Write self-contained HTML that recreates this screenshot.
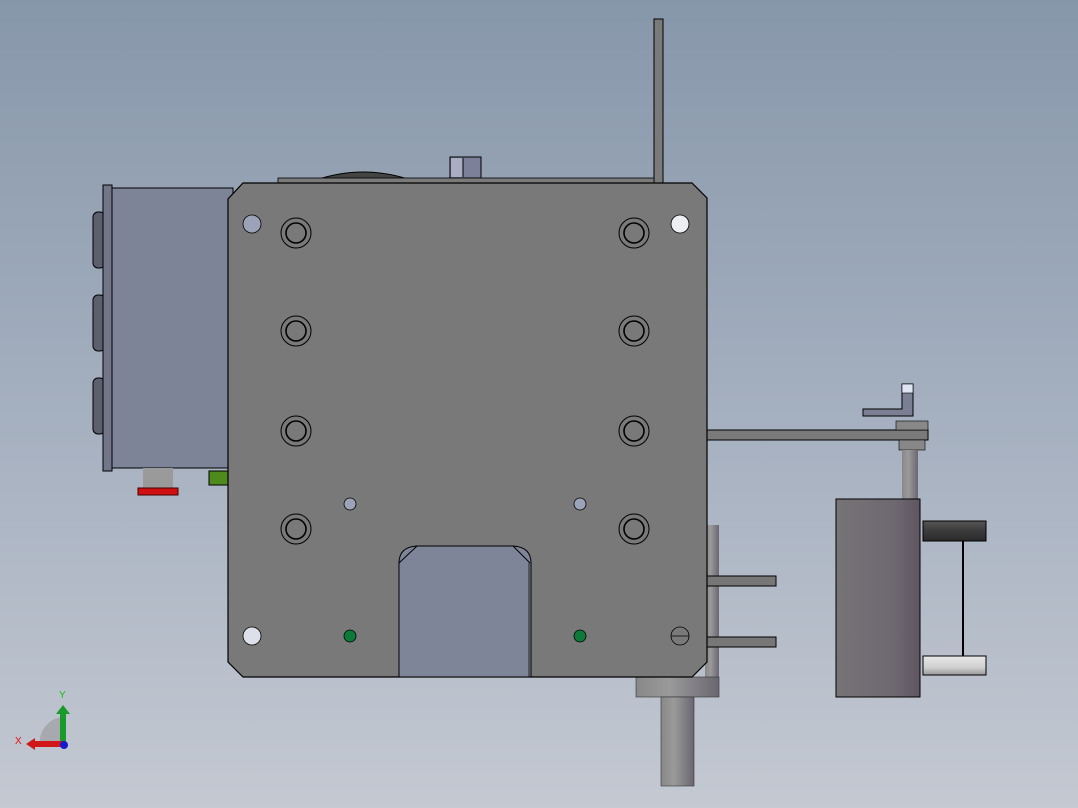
<!DOCTYPE html>
<html><head><style>
html,body{margin:0;padding:0;width:1078px;height:808px;overflow:hidden}
</style></head><body>
<svg width="1078" height="808" viewBox="0 0 1078 808" xmlns="http://www.w3.org/2000/svg">
<defs>
<linearGradient id="bg" x1="0" y1="0" x2="0" y2="1">
<stop offset="0" stop-color="#8797aa"/><stop offset="0.5" stop-color="#a4afbf"/><stop offset="1" stop-color="#c4c9d2"/>
</linearGradient>
<linearGradient id="blk" x1="0" y1="0" x2="1" y2="0">
<stop offset="0" stop-color="#767476"/><stop offset="0.7" stop-color="#6e6870"/><stop offset="1" stop-color="#5e5560"/>
</linearGradient>
<linearGradient id="cyl" x1="0" y1="0" x2="1" y2="0">
<stop offset="0" stop-color="#888"/><stop offset="0.4" stop-color="#9a9a9a"/><stop offset="1" stop-color="#6a6670"/>
</linearGradient>
<linearGradient id="dk" x1="0" y1="0" x2="0" y2="1">
<stop offset="0" stop-color="#555"/><stop offset="0.5" stop-color="#3a3a3a"/><stop offset="1" stop-color="#2a2a2a"/>
</linearGradient>
<linearGradient id="lt" x1="0" y1="0" x2="0" y2="1">
<stop offset="0" stop-color="#e8e8e8"/><stop offset="0.6" stop-color="#d0d0d0"/><stop offset="1" stop-color="#999"/>
</linearGradient>
</defs>
<rect width="1078" height="808" fill="url(#bg)"/>

<!-- top rod -->
<rect x="654" y="19" width="9" height="165" fill="#7a7a7a" stroke="#000" stroke-width="1"/>
<!-- hex nut -->
<rect x="450" y="157" width="31" height="21" fill="#7d8099" stroke="#000"/>
<rect x="451" y="158" width="12" height="19" fill="#a9adc2"/>
<line x1="463" y1="158" x2="463" y2="177" stroke="#000"/>
<!-- dome -->
<path d="M316 180 Q363 164 411 180 Z" fill="#444" stroke="#000"/>
<rect x="278" y="178" width="376" height="5" fill="#7a7a7a" stroke="#000" stroke-width="0.8"/>

<!-- left box -->
<rect x="93" y="212" width="12" height="56" rx="5" fill="#5d5f6e" stroke="#000"/>
<rect x="93" y="295" width="12" height="56" rx="5" fill="#5d5f6e" stroke="#000"/>
<rect x="93" y="378" width="12" height="56" rx="5" fill="#5d5f6e" stroke="#000"/>
<rect x="103" y="188" width="130" height="280" fill="#7d8498" stroke="#000"/>
<rect x="103" y="185" width="9" height="286" fill="#727688" stroke="#000"/>
<rect x="143" y="468" width="30" height="20" fill="#9a9a9a"/>
<rect x="138" y="488" width="40" height="7" fill="#d01010" stroke="#400"/>
<rect x="209" y="471" width="20" height="14" fill="#4f8a1c" stroke="#000"/>

<!-- right mechanism -->
<rect x="705" y="525" width="14" height="170" fill="url(#cyl)"/>
<rect x="707" y="576" width="69" height="10" fill="#777" stroke="#000"/>
<rect x="707" y="637" width="69" height="10" fill="#777" stroke="#000"/>
<rect x="636" y="677" width="83" height="20" fill="url(#cyl)" stroke="#333" stroke-width="0.6"/>
<rect x="661" y="697" width="33" height="89" fill="url(#cyl)" stroke="#333" stroke-width="0.6"/>

<rect x="707" y="430" width="221" height="10" fill="#7a7a7a" stroke="#000"/>
<rect x="896" y="421" width="32" height="9" fill="#888" stroke="#000" stroke-width="0.6"/>
<rect x="899" y="440" width="26" height="10" fill="#888" stroke="#000" stroke-width="0.6"/>
<rect x="902" y="450" width="16" height="50" fill="url(#cyl)"/>
<path d="M902 384 H913 V416 H863 V409 H902 Z" fill="#7b7f93" stroke="#000"/>
<rect x="902" y="384" width="11" height="9" fill="#dfe4f4" stroke="#000" stroke-width="0.6"/>
<rect x="836" y="499" width="84" height="198" fill="url(#blk)" stroke="#000"/>
<rect x="923" y="521" width="63" height="20" fill="url(#dk)" stroke="#000"/>
<rect x="923" y="656" width="63" height="19" fill="url(#lt)" stroke="#000"/>
<line x1="963" y1="541" x2="963" y2="656" stroke="#000" stroke-width="2"/>

<!-- main plate -->
<path d="M243 183 H692 L707 198 V662 L692 677 H243 L228 662 V199 Z" fill="#797979" stroke="#000" stroke-width="1.2"/>
<g fill="none" stroke="#000" stroke-width="1">
<circle cx="296" cy="233" r="15"/><circle cx="296" cy="233" r="10" stroke-width="1.6"/>
<circle cx="634" cy="233" r="15"/><circle cx="634" cy="233" r="10" stroke-width="1.6"/>
<circle cx="296" cy="331" r="15"/><circle cx="296" cy="331" r="10" stroke-width="1.6"/>
<circle cx="634" cy="331" r="15"/><circle cx="634" cy="331" r="10" stroke-width="1.6"/>
<circle cx="296" cy="431" r="15"/><circle cx="296" cy="431" r="10" stroke-width="1.6"/>
<circle cx="634" cy="431" r="15"/><circle cx="634" cy="431" r="10" stroke-width="1.6"/>
<circle cx="296" cy="529" r="15"/><circle cx="296" cy="529" r="10" stroke-width="1.6"/>
<circle cx="634" cy="529" r="15"/><circle cx="634" cy="529" r="10" stroke-width="1.6"/>
</g>
<g stroke="#000" stroke-width="0.8">
<circle cx="252" cy="224" r="9" fill="#9ca3b8"/>
<circle cx="680" cy="224" r="9" fill="#eceef2"/>
<circle cx="350" cy="504" r="6" fill="#9ca3b8"/>
<circle cx="580" cy="504" r="6" fill="#9ca3b8"/>
<circle cx="252" cy="636" r="9" fill="#dde0e8"/>
<circle cx="680" cy="636" r="9" fill="#797979"/>
<line x1="671" y1="636" x2="689" y2="636"/>
<circle cx="350" cy="636" r="6" fill="#0d7a3a"/>
<circle cx="580" cy="636" r="6" fill="#0d7a3a"/>
</g>
<path d="M399 677 V563 Q399 547 417 546 H513 Q531 547 531 563 V677 Z" fill="#7e8598" stroke="#000"/>
<line x1="399" y1="563" x2="417" y2="546" stroke="#000"/>
<line x1="513" y1="546" x2="530" y2="563" stroke="#000"/>
<line x1="529" y1="563" x2="529" y2="677" stroke="#000" stroke-width="0.7"/>

<!-- triad -->
<path d="M40 745 A25 25 0 0 1 63 717 V745 Z" fill="#a7a9ae"/>
<rect x="60" y="713" width="6" height="32" fill="#1a9a2a"/>
<path d="M56 714 L63 705 L70 714 Z" fill="#1a9a2a"/>
<rect x="34" y="741" width="30" height="6" fill="#d01818"/>
<path d="M35 738 L26 744 L35 750 Z" fill="#d01818"/>
<circle cx="64" cy="745" r="4" fill="#1818d0"/>
<text x="59" y="698" font-family="Liberation Sans, sans-serif" font-size="10" fill="#10c010">Y</text>
<text x="15" y="744" font-family="Liberation Sans, sans-serif" font-size="10" fill="#e01010">X</text>
</svg>
</body></html>
